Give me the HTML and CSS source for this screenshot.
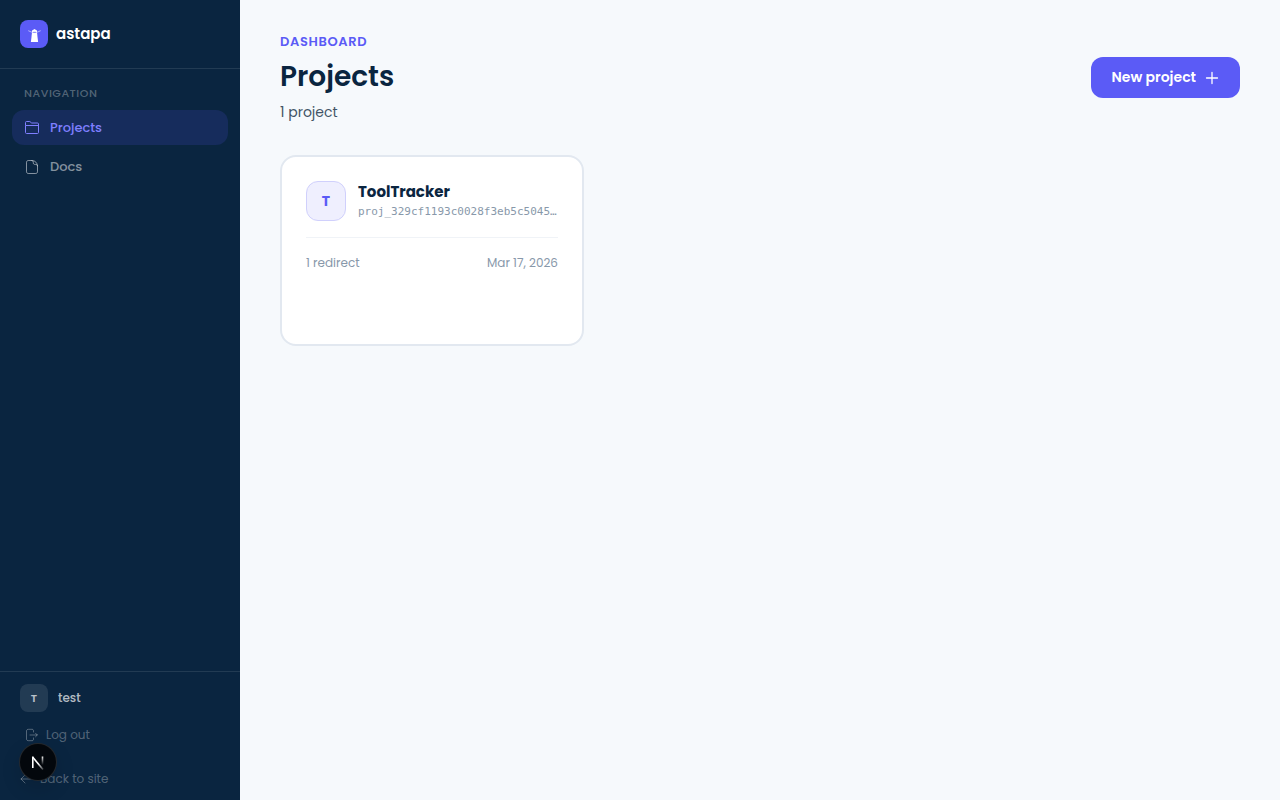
FILE: index.html
```html
<!DOCTYPE html>
<html lang="en">
<head>
    <meta charset="UTF-8">
    <meta name="viewport" content="width=device-width, initial-scale=1.0">
    <title>Projects - astapa</title>
    <link rel="stylesheet" href="styles.css">
</head>
<body>
    <aside class="sidebar">
        <a class="brand" href="#">
            <span class="brand-logo">
                <svg width="28" height="28" viewBox="0 0 28 28" fill="#fff">
                    <path d="M12 12.500h5L18.100 22h-7.200z"/>
                    <path d="M12 12.500V11c0-.7.800-1 1.300-1.200L14.500 9l1.200.8c.5.2 1.300.5 1.300 1.200v1.500z"/>
                    <path d="M12 12.300 8.300 10.700M17 12.300l3.700-1.600" stroke="#fff" stroke-opacity=".6" stroke-width=".9"/>
                    <path d="M13.100 12.300h2.800" stroke="#5b5bf6" stroke-width=".7"/>
                </svg>
            </span>
            <span class="brand-name">astapa</span>
        </a>
        <nav class="nav">
            <p class="nav-label">Navigation</p>
            <a class="nav-item active" href="#">
                <svg width="16" height="16" viewBox="0 0 16 16" fill="none" stroke="currentColor" stroke-linejoin="round">
                    <path d="M1.500 5.500v-3c0-.6.400-1 1-1h3.300l1.900 1.500h5.800c.6 0 1 .4 1 1v8.500c0 .6-.4 1-1 1h-11c-.6 0-1-.4-1-1v-7h13"/>
                </svg>
                Projects
            </a>
            <a class="nav-item" href="#">
                <svg width="16" height="16" viewBox="0 0 16 16" fill="none" stroke="currentColor" stroke-linejoin="round">
                    <path d="M8 1.500H4.300c-1 0-1.800.8-1.800 1.800v9.400c0 1 .8 1.800 1.800 1.800h7.400c1 0 1.800-.8 1.800-1.800V7C13.500 4 11 1.500 8 1.500z"/>
                    <path d="M7.500 1.500c1 0 1.800.8 1.800 1.800v.6c0 .9.600 1.500 1.400 1.500h1c1 0 1.800.8 1.800 1.800"/>
                </svg>
                Docs
            </a>
        </nav>
        <div class="sidebar-footer">
            <div class="user">
                <span class="user-avatar">T</span>
                <span class="user-name">test</span>
            </div>
            <button class="logout" type="button">
                <svg width="14" height="14" viewBox="0 0 14 14" fill="none" stroke="currentColor" stroke-linecap="round" stroke-linejoin="round">
                    <path d="M8.500 4V2.800c0-.9-.6-1.500-1.500-1.500H3.500C2.300 1.300 1.500 2 1.500 3v8c0 1 .8 1.700 2 1.700H7c.9 0 1.500-.6 1.500-1.500V10"/>
                    <path d="M5 7h7.300M10.500 5.200 12.300 7l-1.800 1.800"/>
                </svg>
                Log out
            </button>
            <a class="back-link" href="#">
                <svg width="12" height="12" viewBox="0 0 12 12" fill="none" stroke="currentColor" stroke-linecap="round" stroke-linejoin="round">
                    <path d="M11 6H1M5 2 1 6l4 4"/>
                </svg>
                Back to site
            </a>
        </div>
    </aside>

    <main class="main">
        <header class="page-header">
            <div>
                <p class="eyebrow">Dashboard</p>
                <h1>Projects</h1>
                <p class="subtitle">1 project</p>
            </div>
            <button class="btn-primary" type="button">
                New project
                <svg width="16" height="16" viewBox="0 0 16 16" fill="none" stroke="currentColor" stroke-width="1.300" stroke-linecap="round">
                    <path d="M8 2.500v11M2.500 8h11"/>
                </svg>
            </button>
        </header>
        <div class="project-grid">
            <a class="card" href="#">
                <div class="card-head">
                    <span class="card-icon">T</span>
                    <div class="card-title">
                        <h2>ToolTracker</h2>
                        <p class="project-id">proj_329cf1193c0028f3eb5c5045a71e</p>
                    </div>
                </div>
                <div class="card-meta">
                    <span>1 redirect</span>
                    <span>Mar 17, 2026</span>
                </div>
            </a>
        </div>
    </main>

    <button class="dev-badge" type="button" aria-label="Dev tools">
        <svg width="36" height="36" viewBox="0 0 36 36" fill="none" stroke-width="1.600">
            <defs>
                <linearGradient id="fade-right" x1="0" y1="12" x2="0" y2="21" gradientUnits="userSpaceOnUse">
                    <stop offset="0" stop-color="#fff"/>
                    <stop offset="1" stop-color="#fff" stop-opacity="0"/>
                </linearGradient>
                <linearGradient id="fade-diag" x1="19" y1="19" x2="24" y2="25" gradientUnits="userSpaceOnUse">
                    <stop offset="0" stop-color="#fff"/>
                    <stop offset="1" stop-color="#fff" stop-opacity=".2"/>
                </linearGradient>
            </defs>
            <path d="M12.800 13.200 23 25.500" stroke="url(#fade-diag)"/>
            <path d="M12.800 24V12.500" stroke="#fff"/>
            <path d="M22.500 12.500v9.500" stroke="url(#fade-right)"/>
        </svg>
    </button>
</body>
</html>
```
FILE: styles.css
```css
* {
    box-sizing: border-box;
}
body {
    margin: 0;
    min-height: 100vh;
    display: flex;
    background-color: #f6f9fc;
    font-family: Poppins, Inter, sans-serif;
    color: #0a2540;
}
h1, h2, p {
    margin: 0;
}
a {
    color: inherit;
    text-decoration: none;
}
button {
    border: 0;
    font-family: inherit;
    cursor: pointer;
}
svg {
    flex-shrink: 0;
}

/* Sidebar */
.sidebar {
    display: flex;
    flex-direction: column;
    flex-shrink: 0;
    width: 240px;
    background-color: #0a2540;
}
.brand {
    display: flex;
    align-items: center;
    gap: 8px;
    padding: 20px;
    border-bottom: 1px solid rgba(255, 255, 255, 0.1);
}
.brand-logo {
    width: 28px;
    height: 28px;
    border-radius: 8px;
    background-color: #5b5bf6;
}
.brand-name {
    color: #fff;
    font-size: 15px;
    font-weight: 600;
    line-height: 22px;
}
.nav {
    display: flex;
    flex-direction: column;
    flex: 1;
    gap: 4px;
    padding: 16px 12px;
}
.nav-label {
    padding: 0 12px 4px;
    color: rgba(255, 255, 255, 0.3);
    font-size: 11px;
    font-weight: 500;
    letter-spacing: 0.05em;
    line-height: 17px;
    text-transform: uppercase;
}
.nav-item {
    display: flex;
    align-items: center;
    gap: 10px;
    padding: 8px 12px;
    border-radius: 12px;
    color: rgba(255, 255, 255, 0.5);
    font-size: 13px;
    font-weight: 500;
    line-height: 19px;
}
.nav-item.active {
    background-color: #162c5c;
    color: #7f7fff;
}
.sidebar-footer {
    display: flex;
    flex-direction: column;
    align-items: flex-start;
    padding: 12px 20px;
    border-top: 1px solid rgba(255, 255, 255, 0.1);
}
.user {
    display: flex;
    align-items: center;
    gap: 10px;
}
.user-avatar {
    width: 28px;
    height: 28px;
    border-radius: 8px;
    background-color: rgba(255, 255, 255, 0.1);
    color: rgba(255, 255, 255, 0.7);
    font-size: 11px;
    font-weight: 600;
    line-height: 28px;
    text-align: center;
}
.user-name {
    color: rgba(255, 255, 255, 0.7);
    font-size: 12px;
    font-weight: 500;
}
.logout {
    display: flex;
    align-items: center;
    gap: 7px;
    margin-top: 8px;
    padding: 6px 5px;
    background: none;
    color: rgba(255, 255, 255, 0.3);
    font-size: 12px;
    line-height: 18px;
}
.back-link {
    display: flex;
    align-items: center;
    gap: 8px;
    margin-top: 20px;
    color: rgba(255, 255, 255, 0.3);
    font-size: 12px;
    line-height: 18px;
}

/* Page */
.main {
    flex: 1;
    min-width: 0;
    padding: 32px 40px;
}
.page-header {
    display: flex;
    align-items: center;
    justify-content: space-between;
    margin-bottom: 32px;
}
.eyebrow {
    color: #5b5bf6;
    font-size: 13px;
    font-weight: 600;
    letter-spacing: 0.05em;
    line-height: 20px;
    text-transform: uppercase;
}
h1 {
    margin: 4px 0;
    font-size: 28px;
    font-weight: 600;
    line-height: 42px;
}
.subtitle {
    color: #425466;
    font-size: 14px;
    line-height: 21px;
}
.btn-primary {
    display: flex;
    align-items: center;
    gap: 8px;
    padding: 10px 20px;
    border-radius: 12px;
    background-color: #5b5bf6;
    color: #fff;
    font-size: 14px;
    font-weight: 600;
    line-height: 21px;
}

/* Project cards */
.project-grid {
    display: grid;
    grid-template-columns: repeat(3, 1fr);
    gap: 24px;
}
.card {
    min-width: 0;
    min-height: 191px;
    padding: 24px;
    border: 2px solid #e2e8f0;
    border-radius: 16px;
    background-color: #fff;
}
.card-head {
    display: flex;
    gap: 12px;
    padding-bottom: 16px;
    border-bottom: 1px solid #f0f3f7;
}
.card-icon {
    flex-shrink: 0;
    width: 40px;
    height: 40px;
    border: 1px solid #d0d0fc;
    border-radius: 12px;
    background-color: #efeffe;
    color: #5b5bf6;
    font-size: 14px;
    font-weight: 700;
    line-height: 38px;
    text-align: center;
}
.card-title {
    min-width: 0;
}
.card-title h2 {
    font-size: 15px;
    font-weight: 700;
    line-height: 22px;
}
.project-id {
    overflow: hidden;
    color: #8898aa;
    font-family: "DejaVu Sans Mono", monospace;
    font-size: 11px;
    line-height: 17px;
    text-overflow: ellipsis;
    white-space: nowrap;
}
.card-meta {
    display: flex;
    justify-content: space-between;
    padding-top: 16px;
    color: #8898aa;
    font-size: 12px;
    line-height: 18px;
}

/* Floating dev badge */
.dev-badge {
    position: fixed;
    left: 20px;
    bottom: 20px;
    width: 36px;
    height: 36px;
    padding: 0;
    border-radius: 50%;
    background-color: #03070c;
    box-shadow: 0 0 0 1px #25282c, 0 8px 20px rgba(0, 0, 0, 0.15);
}
.dev-badge svg {
    display: block;
}
```
